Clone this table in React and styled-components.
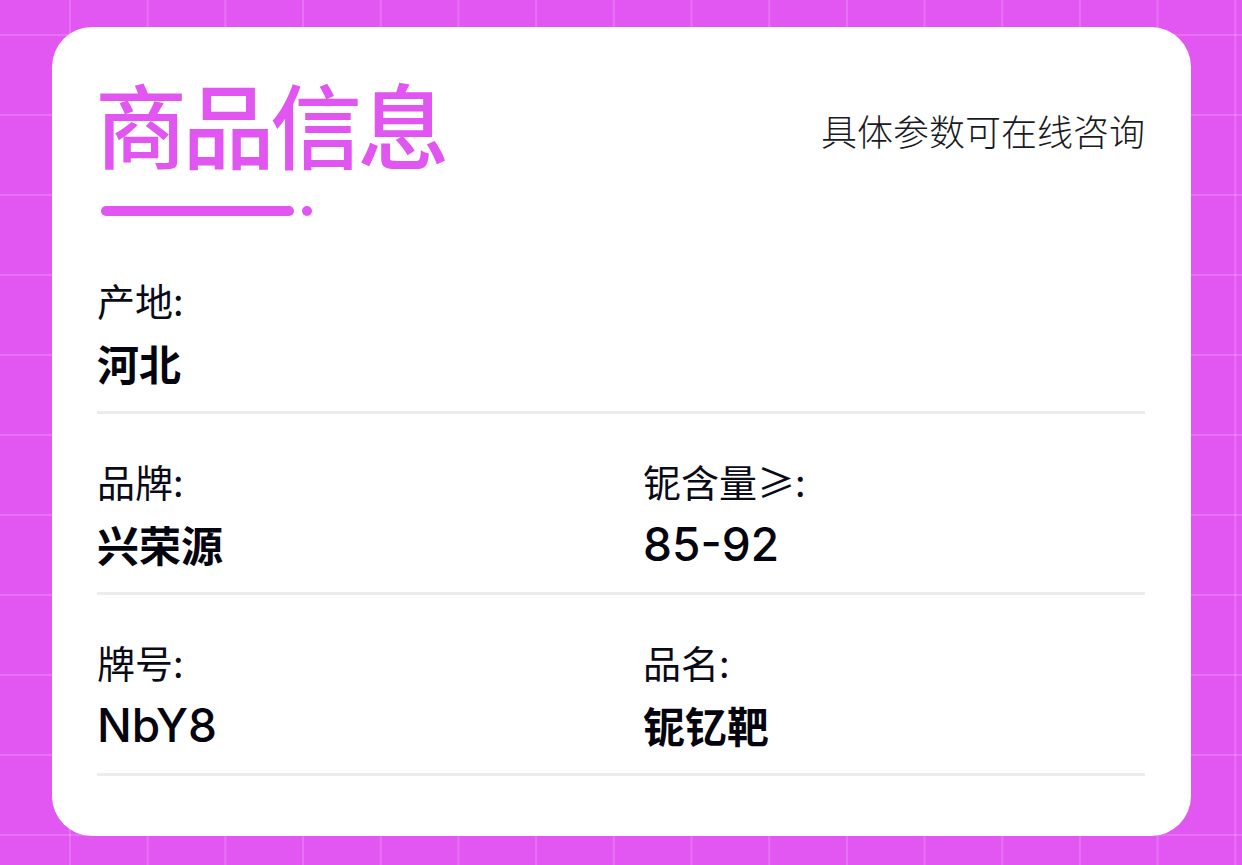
import React from "react";
import styled, { createGlobalStyle } from "styled-components";

const Global = createGlobalStyle`
  html, body { margin: 0; padding: 0; }
  body {
    background-color: #e256f2;
    background-image:
      linear-gradient(to right, rgba(255,255,255,0.16) 2px, transparent 2px),
      linear-gradient(to bottom, rgba(255,255,255,0.16) 2px, transparent 2px);
    background-size: 77.7px 80px;
    background-position: 69px 34px;
    font-family: "Noto Sans CJK SC", "Noto Sans", sans-serif;
    color: #0b0b18;
  }
  * { box-sizing: border-box; }
`;

const Page = styled.div`
  min-height: 865px;
  padding: 27px 51px 30px 52px;
`;

const Card = styled.div`
  background: #ffffff;
  border-radius: 40px;
  padding: 49px 46px 60px 45px;
`;

const Header = styled.div`
  display: flex;
  justify-content: space-between;
  align-items: flex-start;
`;

const TitleBlock = styled.div`
  display: flex;
  flex-direction: column;
`;

const Title = styled.h1`
  margin: 0 0 0 -2px;
  font-size: 92px;
  line-height: 1;
  font-weight: 500;
  color: #e156f0;
  letter-spacing: -4.5px;
`;

const Underline = styled.div`
  display: flex;
  align-items: center;
  gap: 8px;
  margin-top: 38px;
  padding-left: 4px;
`;

const Bar = styled.span`
  display: block;
  width: 193px;
  height: 10px;
  border-radius: 5px;
  background: #e156f0;
`;

const Dot = styled.span`
  display: block;
  width: 10px;
  height: 10px;
  border-radius: 50%;
  background: #e156f0;
`;

const Subtitle = styled.div`
  font-size: 36px;
  line-height: 40px;
  font-weight: 300;
  color: #1a1a24;
  margin-top: 34px;
`;

const InfoList = styled.div`
  margin-top: 17px;
`;

const Row = styled.div`
  display: grid;
  grid-template-columns: 546px 1fr;
  padding: 47px 0 25px;
  border-bottom: 3px solid #ececee;
`;

const Cell = styled.div`
  display: flex;
  flex-direction: column;
  gap: 20px;
`;

const Label = styled.div`
  font-size: 38px;
  line-height: 40px;
  font-weight: 400;
  color: #0b0b18;
`;

const Value = styled.div`
  font-family: ${(p) =>
    p.$latin ? `"Inter", "Noto Sans CJK SC", sans-serif` : `"Noto Sans CJK SC", sans-serif`};
  font-size: ${(p) => (p.$latin ? "46px" : "42px")};
  line-height: 46px;
  font-weight: ${(p) => (p.$latin ? 500 : 700)};
  color: #05050f;
`;

const rows = [
  [{ label: "产地:", value: "河北" }],
  [
    { label: "品牌:", value: "兴荣源" },
    { label: "铌含量≥:", value: "85-92", latin: true },
  ],
  [
    { label: "牌号:", value: "NbY8", latin: true },
    { label: "品名:", value: "铌钇靶" },
  ],
];

export default function App() {
  return (
    <>
      <Global />
      <Page>
        <Card>
          <Header>
            <TitleBlock>
              <Title>商品信息</Title>
              <Underline>
                <Bar />
                <Dot />
              </Underline>
            </TitleBlock>
            <Subtitle>具体参数可在线咨询</Subtitle>
          </Header>
          <InfoList>
            {rows.map((cells, i) => (
              <Row key={i}>
                {cells.map((c) => (
                  <Cell key={c.label}>
                    <Label>{c.label}</Label>
                    <Value $latin={c.latin}>{c.value}</Value>
                  </Cell>
                ))}
              </Row>
            ))}
          </InfoList>
        </Card>
      </Page>
    </>
  );
}
